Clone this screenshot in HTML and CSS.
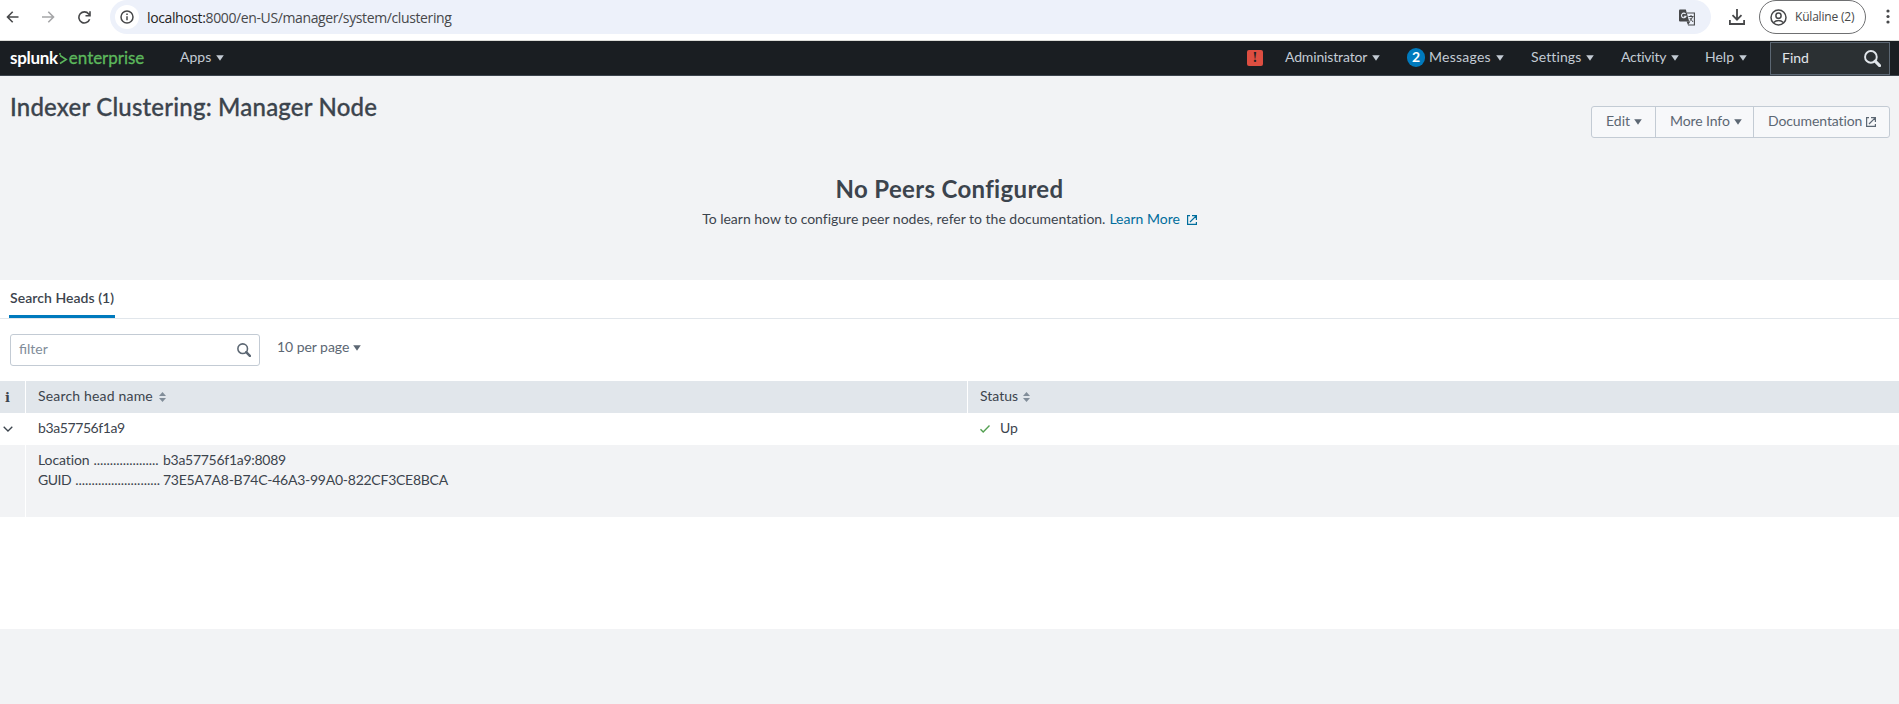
FILE: index.html
```html
<!DOCTYPE html>
<html lang="en">
<head>
<meta charset="utf-8">
<title>Indexer Clustering: Manager Node</title>
<link rel="stylesheet" href="styles.css">
</head>
<body>
<svg width="0" height="0" class="defs">
  <symbol id="caret" viewBox="0 0 8 6"><path d="M.2.300h7.600L4 5.700z" fill="currentColor"/></symbol>
  <symbol id="external" viewBox="0 0 10 10"><path d="M3 .6H.6v8.800h8.800V7M5 .6h4.400v4.400M9.200.8 3 7" fill="none" stroke="currentColor" stroke-width="1.200"/></symbol>
  <symbol id="sort" viewBox="0 0 7 10"><path d="M0 4h7L3.500 0zM0 6h7l-3.500 4z" fill="currentColor"/></symbol>
  <symbol id="search" viewBox="0 0 16 16"><circle cx="6.500" cy="6.500" r="5.500" fill="none" stroke="currentColor" stroke-width="1.800"/><path d="m10.500 10.500 4.200 4.200" stroke="currentColor" stroke-width="2.800" stroke-linecap="round"/></symbol>
</svg>

<header class="browser">
  <div class="browser-nav">
    <svg width="13" height="12" viewBox="0 0 13 12" class="back"><path d="M12.500 6H1.500M6.700.8 1.500 6l5.200 5.200" fill="none" stroke="currentColor" stroke-width="1.600"/></svg>
    <svg width="13" height="12" viewBox="0 0 13 12" class="forward"><path d="M0 6h11.500M6.300.8 11.500 6l-5.200 5.200" fill="none" stroke="currentColor" stroke-width="1.600"/></svg>
    <svg width="13" height="13" viewBox="0 0 13 13" class="reload"><path d="M11.600 8.200A5.500 5.500 0 1 1 10.700 3l1.300 1.600M12 .3v4.500H7.500" fill="none" stroke="currentColor" stroke-width="1.600"/></svg>
  </div>
  <div class="address">
    <span class="site-info"><svg width="14" height="14" viewBox="0 0 14 14"><circle cx="7" cy="7" r="6" fill="none" stroke="currentColor" stroke-width="1.500"/><path d="M7 6.200v4M7 3.400v1.500" stroke="currentColor" stroke-width="1.500"/></svg></span>
    <span class="url"><b>localhost:</b>8000/en-US/manager/system/clustering</span>
    <svg class="translate" width="17" height="17" viewBox="0 0 17 17"><path d="M8 4h7.400v12H9" fill="none" stroke="currentColor" stroke-width="1.100"/><path d="M0 1.500Q0 .5 1 .5h5.800l3.400 12H1q-1 0-1-1z" fill="currentColor"/><path d="M7.600 12.500 9 16l2.400-3.500z" fill="currentColor"/><path d="M6.600 5A2.300 2.300 0 1 0 7 7.200H4.800" fill="none" stroke="#edf1fa" stroke-width="1.100"/><path d="M9.500 7.500h5M12 6v1.500M13.700 7.500q-1 3-3.200 4.500M10.800 9l3.300 4" fill="none" stroke="currentColor"/></svg>
  </div>
  <svg class="download" width="16" height="16" viewBox="0 0 16 16"><path d="M8 0v10.500M3.500 6.200 8 10.700l4.500-4.500M.9 11v4h14.200v-4" fill="none" stroke="currentColor" stroke-width="1.800"/></svg>
  <div class="profile">
    <svg width="17" height="17" viewBox="0 0 17 17" fill="none" stroke="currentColor" stroke-width="1.500"><circle cx="8.500" cy="8.500" r="7.500"/><circle cx="8.500" cy="6.700" r="2.600"/><path d="M3.300 13.700q5.200-4.400 10.400 0"/></svg>
    <span>Külaline (2)</span>
  </div>
  <svg class="kebab" width="4" height="16" viewBox="0 0 4 16" fill="currentColor"><circle cx="2" cy="2" r="1.600"/><circle cx="2" cy="7.500" r="1.600"/><circle cx="2" cy="13" r="1.600"/></svg>
</header>

<nav class="appbar">
  <div class="logo"><b>splunk</b><svg width="9" height="12" viewBox="0 0 9 12"><path d="M1 2.500 7.300 6.500 1 10.500M1 0v2" fill="none" stroke="currentColor" stroke-width="1.500"/></svg><span>enterprise</span></div>
  <div class="item apps"><span>Apps</span><svg class="caret"><use href="#caret"/></svg></div>
  <div class="alert">!</div>
  <div class="item admin"><span>Administrator</span><svg class="caret"><use href="#caret"/></svg></div>
  <div class="item messages"><i class="count">2</i><span>Messages</span><svg class="caret"><use href="#caret"/></svg></div>
  <div class="item settings"><span>Settings</span><svg class="caret"><use href="#caret"/></svg></div>
  <div class="item activity"><span>Activity</span><svg class="caret"><use href="#caret"/></svg></div>
  <div class="item help"><span>Help</span><svg class="caret"><use href="#caret"/></svg></div>
  <div class="find"><span>Find</span><svg width="17" height="17"><use href="#search"/></svg></div>
</nav>

<section class="hero">
  <div class="title-row">
    <h1>Indexer Clustering: Manager Node</h1>
    <div class="buttons">
      <div class="btn edit"><span>Edit</span><svg class="caret"><use href="#caret"/></svg></div>
      <div class="btn more"><span>More Info</span><svg class="caret"><use href="#caret"/></svg></div>
      <div class="btn docs"><span>Documentation</span><svg class="ext"><use href="#external"/></svg></div>
    </div>
  </div>
  <h2>No Peers Configured</h2>
  <p class="hint"><span class="hint-text">To learn how to configure peer nodes, refer to the documentation.</span><a class="learn">Learn More</a><svg class="ext"><use href="#external"/></svg></p>
</section>

<main>
  <div class="tabs"><div class="tab"><span>Search Heads (1)</span></div></div>
  <div class="controls">
    <div class="filter"><span>filter</span><svg width="14" height="14"><use href="#search"/></svg></div>
    <div class="perpage"><span>10 per page</span><svg class="caret"><use href="#caret"/></svg></div>
  </div>
  <div class="row head">
    <div class="c-info">i</div>
    <div class="c-name"><span>Search head name</span><svg class="sort"><use href="#sort"/></svg></div>
    <div class="c-status"><span>Status</span><svg class="sort"><use href="#sort"/></svg></div>
  </div>
  <div class="row body">
    <div class="c-info"><svg width="10" height="6" viewBox="0 0 10 6"><path d="m.7.7 4.300 4.300L9.300.7" fill="none" stroke="currentColor" stroke-width="1.300"/></svg></div>
    <div class="c-name"><span class="host">b3a57756f1a9</span></div>
    <div class="c-status"><svg class="check" width="10" height="8" viewBox="0 0 10 8"><path d="m.5 4.200 2.700 2.800L9.500.6" fill="none" stroke="currentColor" stroke-width="1.400"/></svg><span>Up</span></div>
  </div>
  <div class="row detail">
    <div class="c-info"></div>
    <dl>
      <dt><span class="k-loc">Location</span><i class="dots">....................</i></dt><dd><span class="v-loc">b3a57756f1a9:8089</span></dd>
      <dt><span class="k-guid">GUID</span><i class="dots">..........................</i></dt><dd><span class="v-guid">73E5A7A8-B74C-46A3-99A0-822CF3CE8BCA</span></dd>
    </dl>
  </div>
</main>
</body>
</html>
```
FILE: styles.css
```css
* { box-sizing: border-box; }
body { margin: 0; background: #f2f3f5; color: #3c444d; font: 14px/20px Lato, "Open Sans", sans-serif; height: 704px; overflow: hidden; }
.defs { position: absolute; }
svg { flex: none; display: block; }
span, a { white-space: nowrap; }
i { font-style: normal; }
.caret { width: 8px; height: 6px; }
.ext { width: 10px; height: 10px; }
.item span, .btn span, .hint span, .hint a, .filter span, .perpage span, .row span { padding-bottom: 1.500px; }

.browser { height: 41px; background: #fff; border-bottom: 1px solid #dcdcd8; display: flex; align-items: flex-start; color: #47484a; font-family: "Open Sans", "Noto Sans", sans-serif; }
.browser-nav { width: 110px; height: 34px; padding-left: 6px; display: flex; align-items: center; gap: 23px; }
.forward { color: #a5a6a8; }
.address { width: 1601px; height: 34px; background: #edf1fa; border-radius: 17px; display: flex; align-items: center; padding: 0 15px 0 5px; }
.site-info { width: 24px; height: 24px; border-radius: 50%; background: #fff; display: grid; place-items: center; }
.url { margin-left: 8px; padding-top: 1px; font-size: 14px; letter-spacing: -.38px; flex: 1; }
.url b { font-weight: 400; color: #1f1f1f; }
.download { margin: 9px 14px 0 18px; }
.profile { width: 107px; height: 34px; border: 1px solid #6f7072; border-radius: 17px; display: flex; align-items: center; padding-left: 10px; font-size: 12px; gap: 8px; letter-spacing: -.2px; }
.kebab { margin: 9px 0 0 20px; }

.appbar { height: 35px; background: #1a1e22; border-bottom: 1px solid #3c444d; display: flex; align-items: center; padding-left: 10px; color: #c3cbd4; }
.logo { width: 170px; display: flex; align-items: center; font-size: 17px; color: #5cb85c; padding-bottom: 1px; }
.logo b { color: #fff; letter-spacing: -.3px; }
.logo svg { margin: 2px 1px 0 1px; }
.logo span { letter-spacing: -.02px; -webkit-text-stroke: .3px; }
.item { display: flex; align-items: center; gap: 5px; padding-bottom: 1px; }
.apps { width: 1067px; }
.alert { width: 16px; height: 16px; border-radius: 2px; background: #dc4e41; color: #1a1e22; font: 700 12px/16px "DejaVu Serif", serif; text-align: center; margin-right: 22px; }
.admin { width: 122px; letter-spacing: -.15px; }
.messages { width: 124px; letter-spacing: .25px; gap: 4px; }
.messages .caret { margin-left: 1px; }
.count { width: 18px; height: 19px; border-radius: 9px; background: #007abd; color: #fff; text-align: center; font-weight: 700; line-height: 18px; letter-spacing: 0; }
.settings { width: 90px; letter-spacing: .12px; }
.activity { width: 84px; letter-spacing: -.25px; }
.help { width: 65px; }
.find { width: 120px; height: 33px; border: 1px solid #5c6773; background: #2b3033; display: flex; align-items: center; justify-content: space-between; padding: 0 8px 0 11px; color: #e1e6eb; }

.hero { height: 204px; }
.title-row { display: flex; justify-content: space-between; height: 96px; padding: 0 9px 0 10px; }
h1 { margin: 16px 0 0; font-size: 24px; line-height: 30px; font-weight: 500; white-space: nowrap; letter-spacing: .19px; -webkit-text-stroke: .3px; }
.buttons { margin-top: 30px; height: 32px; display: flex; border: 1px solid #c3cbd4; border-radius: 3px; background: #f7f8fa; color: #5c6773; }
.btn { display: flex; align-items: center; gap: 4px; padding-left: 14px; }
.btn + .btn { border-left: 1px solid #c3cbd4; }
.edit { width: 63px; padding-left: 14px; }
.more { width: 98px; letter-spacing: -.1px; }
.docs { width: 136px; padding-left: 14px; letter-spacing: -.1px; }
h2 { margin: 2px 0 0; font-size: 24px; line-height: 30px; font-weight: 700; text-align: center; letter-spacing: .33px; }
.hint { margin: 5px 0 0; display: flex; justify-content: center; align-items: center; height: 21px; }
.hint-text { letter-spacing: -.01px; }
.learn { color: #006d9c; margin: 0 7px 0 4px; }
.hint .ext { color: #006d9c; }

main { background: #fff; height: 349px; }
.tabs { height: 39px; border-bottom: 1px solid #e1e6eb; padding-left: 9px; }
.tab { width: 106px; height: 38px; border-bottom: 3px solid #007abd; padding: 8px 0 0 1px; font-weight: 600; letter-spacing: .05px; }
.controls { height: 62px; padding: 15px 10px; display: flex; gap: 17px; }
.filter { width: 250px; height: 32px; border: 1px solid #c3cbd4; border-radius: 3px; display: flex; align-items: center; justify-content: space-between; padding: 0 8px; color: #818d99; }
.filter svg { color: #5c6773; }
.perpage { height: 27px; display: flex; align-items: center; gap: 4px; color: #5c6773; letter-spacing: -.05px; }
.row { display: flex; height: 32px; background: #fff; }
.row > div { display: flex; align-items: center; }
.c-info { width: 26px; border-right: 1px solid #fff; padding-left: 3px; }
.c-name { width: 942px; padding-left: 12px; gap: 6px; }
.c-status { padding-left: 12px; gap: 5px; flex: 1; }
.head { background: #e1e6eb; }
.head .c-info { font: 700 13px "DejaVu Serif", serif; padding-left: 5px; }
.head .c-name { border-right: 1px solid #fff; letter-spacing: .18px; }
.sort { width: 7px; height: 10px; color: #818d99; }
.host { letter-spacing: -.4px; }
.check { color: #53a051; }
.body .c-status { gap: 10px; }
.detail { height: 72px; background: #f2f3f5; }
dl { margin: 5px 0 0 12px; display: grid; grid-template-columns: 125px auto; grid-auto-rows: 20px; height: 40px; }
dt { display: flex; gap: 4px; }
dd { margin: 0; }
.k-loc { letter-spacing: -.1px; }
.k-guid { letter-spacing: -.45px; }
.dots { letter-spacing: -.05px; }
.v-loc { letter-spacing: -.28px; }
.v-guid { letter-spacing: -.25px; }
```
